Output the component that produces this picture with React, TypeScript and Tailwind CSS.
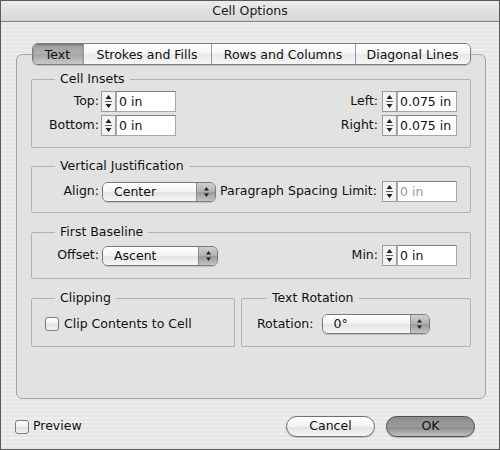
import React from "react"

function Stepper() {
  return (
    <svg width="15" height="21" viewBox="0 0 15 21" className="shrink-0">
      <rect x="0.5" y="0.5" width="14" height="20" fill="#f3f3f3" stroke="#9c9c9c" />
      <path d="M7.5 4 L10.5 8 L4.5 8 Z" fill="#222" />
      <line x1="4" y1="10.5" x2="11" y2="10.5" stroke="#666" />
      <path d="M4.5 13 L10.5 13 L7.5 17 Z" fill="#222" />
    </svg>
  )
}

function NumField({ value, disabled }: { value: string; disabled?: boolean }) {
  return (
    <div className="flex items-center">
      <Stepper />
      <div
        className={
          "w-[60px] h-[21px] bg-white border border-[#a8a8a8] border-t-[#7c7c7c] pl-[2px] leading-[19px] " +
          (disabled ? "text-[#9a9a9a]" : "text-[#111]")
        }
      >
        {value}
      </div>
    </div>
  )
}

function Popup({ value, width }: { value: string; width: string }) {
  return (
    <div
      className={
        "h-[20px] flex rounded-[6px] border border-[#7a7a7a] overflow-hidden shadow-[0_1px_1px_rgba(0,0,0,0.15)] " + width
      }
    >
      <div className="flex-1 pl-[11px] leading-[18px] bg-[linear-gradient(180deg,#ffffff_0%,#f2f2f2_50%,#e4e4e4_51%,#f6f6f6_100%)]">
        {value}
      </div>
      <div className="w-[19px] border-l border-[#8a8a8a] flex items-center justify-center bg-[linear-gradient(180deg,#d0d0d0_0%,#b0b0b0_50%,#989898_51%,#c4c4c4_100%)]">
        <svg width="7" height="12" viewBox="0 0 7 12">
          <path d="M3.5 1 L6 4.5 L1 4.5 Z" fill="#222" />
          <path d="M1 7.5 L6 7.5 L3.5 11 Z" fill="#222" />
        </svg>
      </div>
    </div>
  )
}

function Checkbox() {
  return (
    <div className="w-[14px] h-[14px] rounded-[3px] border border-[#7c7c7c] bg-[linear-gradient(180deg,#ffffff_0%,#eeeeee_50%,#e0e0e0_51%,#f4f4f4_100%)] shrink-0" />
  )
}

function Group({ title, className, children }: { title: string; className?: string; children: React.ReactNode }) {
  return (
    <fieldset className={"border border-[#b2b2b2] rounded-[2px] " + (className ?? "")}>
      <legend className="ml-[10px] px-[5px] leading-[16px] text-[#111]">{title}</legend>
      {children}
    </fieldset>
  )
}

const tabs = [
  { label: "Text", w: "w-[50px]" },
  { label: "Strokes and Fills", w: "w-[128px]" },
  { label: "Rows and Columns", w: "w-[144px]" },
  { label: "Diagonal Lines", w: "w-[115px]" },
]

export default function App() {
  return (
    <div className="w-[500px] h-[450px] flex flex-col border border-[#5a5a5a] font-['DejaVu_Sans',sans-serif] text-[12.5px] text-[#111] bg-[image:repeating-linear-gradient(180deg,#eeeeee_0px,#eeeeee_2px,#e6e6e6_2px,#e6e6e6_4px)] overflow-hidden">
      <div className="h-[21px] shrink-0 flex items-center justify-center border-b border-[#7e7e7e] bg-[linear-gradient(180deg,#ececec_0%,#d6d6d6_100%)] text-[#1a1a1a]">
        Cell Options
      </div>

      <div className="ml-[15px] mt-[32px] w-[470px] h-[345px] border border-[#a6a6a6] rounded-[6px] bg-[#e2e2e2] flex flex-col px-[14px]">
        <div className="-mt-[12px] self-center flex h-[22px] rounded-[6px] border border-[#7a7a7a] overflow-hidden shadow-[0_1px_1px_rgba(0,0,0,0.15)]">
          {tabs.map((t, i) => (
            <div
              key={t.label}
              className={
                "flex items-center justify-center leading-[19px] " +
                t.w +
                (i > 0 ? " border-l border-[#9a9a9a]" : "") +
                (i === 0
                  ? " bg-[linear-gradient(180deg,#9c9c9c_0%,#b2b2b2_50%,#a2a2a2_51%,#cbcbcb_100%)] shadow-[inset_0_1px_2px_rgba(0,0,0,0.3)]"
                  : " bg-[linear-gradient(180deg,#ffffff_0%,#f4f4f4_50%,#e8e8e8_51%,#f6f6f6_100%)]")
              }
            >
              {t.label}
            </div>
          ))}
        </div>

        <Group title="Cell Insets" className="mt-[6px] px-[13px] pt-[4px] pb-[11px]">
          <div className="flex justify-between">
            <div className="flex flex-col gap-[3px]">
              <div className="flex items-center">
                <span className="w-[54px] text-right mr-[2px]">Top:</span>
                <NumField value="0 in" />
              </div>
              <div className="flex items-center">
                <span className="w-[54px] text-right mr-[2px]">Bottom:</span>
                <NumField value="0 in" />
              </div>
            </div>
            <div className="flex flex-col gap-[3px] items-end">
              <div className="flex items-center">
                <span className="mr-[4px]">Left:</span>
                <NumField value="0.075 in" />
              </div>
              <div className="flex items-center">
                <span className="mr-[4px]">Right:</span>
                <NumField value="0.075 in" />
              </div>
            </div>
          </div>
        </Group>

        <Group title="Vertical Justification" className="mt-[10px] px-[13px] pt-[7px] pb-[10px]">
          <div className="flex items-center">
            <span className="w-[54px] text-right mr-[3px]">Align:</span>
            <Popup value="Center" width="w-[114px]" />
            <span className="ml-[4px] flex-1">Paragraph Spacing Limit:</span>
            <NumField value="0 in" disabled />
          </div>
        </Group>

        <Group title="First Baseline" className="mt-[11px] px-[13px] pt-[5px] pb-[12px]">
          <div className="flex items-center">
            <span className="w-[54px] text-right mr-[3px]">Offset:</span>
            <Popup value="Ascent" width="w-[116px]" />
            <span className="ml-auto mr-[4px]">Min:</span>
            <NumField value="0 in" />
          </div>
        </Group>

        <div className="mt-[11px] flex gap-[6px]">
          <Group title="Clipping" className="w-[204px] px-[13px] pt-[8px] pb-[12px]">
            <div className="h-[20px] flex items-center gap-[5px]">
              <Checkbox />
              <span>Clip Contents to Cell</span>
            </div>
          </Group>
          <Group title="Text Rotation" className="flex-1 px-[15px] pt-[8px] pb-[12px]">
            <div className="flex items-center">
              <span className="mr-[8px]">Rotation:</span>
              <Popup value="0°" width="w-[108px]" />
            </div>
          </Group>
        </div>
      </div>

      <div className="mt-[17px] flex items-center px-[14px]">
        <Checkbox />
        <span className="ml-[4px]">Preview</span>
        <div className="ml-auto flex gap-[11px] mr-[10px]">
          <div className="w-[89px] h-[21px] rounded-full border border-[#6e6e6e] flex items-center justify-center bg-[linear-gradient(180deg,#ffffff_0%,#f2f2f2_50%,#e2e2e2_51%,#f6f6f6_100%)] shadow-[0_1px_1px_rgba(0,0,0,0.2)]">
            Cancel
          </div>
          <div className="w-[89px] h-[21px] rounded-full border border-[#4e4e4e] flex items-center justify-center bg-[linear-gradient(180deg,#8c8c8c_0%,#9c9c9c_50%,#888888_51%,#c2c2c2_100%)] shadow-[0_1px_1px_rgba(0,0,0,0.25)]">
            OK
          </div>
        </div>
      </div>
    </div>
  )
}
